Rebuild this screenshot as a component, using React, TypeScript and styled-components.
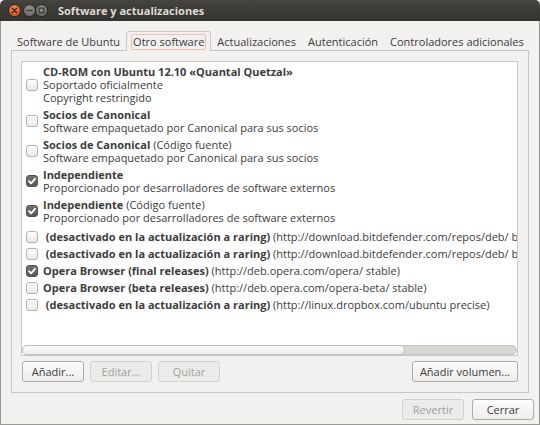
import React from "react";
import styled, { createGlobalStyle } from "styled-components";

const GlobalStyle = createGlobalStyle`
  html, body { margin: 0; padding: 0; background: #f2f1f0; }
  body {
    font-family: "Open Sans", "Noto Sans", "DejaVu Sans", sans-serif;
    font-size: 11px;
    color: #3c3c3c;
  }
  * { box-sizing: border-box; }
`;

const Window = styled.div`
  width: 540px;
  height: 425px;
  display: flex;
  flex-direction: column;
  background: #f2f1f0;
  overflow: hidden;
`;

const TitleBar = styled.div`
  height: 21px;
  flex: none;
  display: flex;
  align-items: center;
  padding-left: 9px;
  background: linear-gradient(#45443f, #3b3a36 50%, #34332f);
  border-radius: 5px 5px 0 0;
`;

const WinButton = styled.span<{ $kind: "close" | "min" | "max" }>`
  width: 11px;
  height: 11px;
  border-radius: 50%;
  flex: none;
  display: inline-flex;
  align-items: center;
  justify-content: center;
  margin-right: ${(p) => (p.$kind === "close" ? "4px" : p.$kind === "min" ? "1px" : "11px")};
  background: ${(p) =>
    p.$kind === "close"
      ? "radial-gradient(circle at 50% 35%, #f79369, #e65a27 65%, #c2461c)"
      : "radial-gradient(circle at 50% 35%, #94928d, #72706b 65%, #5a5854)"};
  box-shadow: 0 0 0 1px rgba(0, 0, 0, 0.3);
`;

const Title = styled.span`
  font-weight: 700;
  font-size: 11px;
  color: #dfdbd2;
`;

const Body = styled.div`
  flex: 1;
  display: flex;
  flex-direction: column;
  border: 1px solid #9a9894;
  border-top: none;
  min-height: 0;
`;

const NotebookArea = styled.div`
  flex: 1;
  display: flex;
  flex-direction: column;
  padding: 10px 10px 0 10px;
  min-height: 0;
`;

const TabBar = styled.div`
  height: 20px;
  flex: none;
  display: flex;
  border-bottom: 1px solid #c9c7c3;
`;

const Tab = styled.div<{ $active?: boolean }>`
  display: flex;
  align-items: center;
  padding: 1px 4px 0 4px;
  border: 1px solid ${(p) => (p.$active ? "#c9c7c3" : "transparent")};
  border-bottom: none;
  border-radius: 3px 3px 0 0;
  background: ${(p) => (p.$active ? "#f2f1f0" : "transparent")};
  margin-bottom: ${(p) => (p.$active ? "-1px" : "0")};
  white-space: nowrap;
`;

const FocusRing = styled.span`
  border: 1px solid #f0bfa9;
  border-radius: 2px;
  padding: 0 1px;
  line-height: 14px;
`;

const TabLabel = styled.span`
  padding: 0 1px;
  line-height: 14px;
`;

const Frame = styled.div`
  flex: 1;
  display: flex;
  flex-direction: column;
  gap: 5px;
  border: 1px solid #c9c7c3;
  border-top: none;
  padding: 10px 10px 10px 9px;
  min-height: 0;
`;

const ListBox = styled.div`
  flex: 1;
  display: flex;
  flex-direction: column;
  background: #ffffff;
  border: 1px solid #cbc9c6;
  min-height: 0;
`;

const Rows = styled.div`
  flex: 1;
  overflow: hidden;
  white-space: nowrap;
`;

const Row = styled.div<{ $padTop: number; $padBottom: number }>`
  display: flex;
  align-items: center;
  gap: 5px;
  padding: ${(p) => `${p.$padTop}px 0 ${p.$padBottom}px 4px`};
`;

const CheckBox = styled.span<{ $checked?: boolean }>`
  width: 12px;
  height: 12px;
  flex: none;
  border-radius: 3px;
  display: inline-flex;
  align-items: center;
  justify-content: center;
  border: 1px solid ${(p) => (p.$checked ? "#54524e" : "#b3b1ad")};
  background: ${(p) =>
    p.$checked
      ? "linear-gradient(#74726e, #5a5854)"
      : "linear-gradient(#fdfdfd, #ebeae8)"};
`;

const RowText = styled.div`
  display: flex;
  flex-direction: column;
`;

const Line = styled.div`
  line-height: 13px;
  height: 13px;
`;

const Strong = styled.span`
  font-weight: 700;
`;

const ScrollTrack = styled.div`
  height: 10px;
  flex: none;
  display: flex;
  background: #d7d6d3;
  border: 1px solid #c8c6c3;
  border-radius: 5px;
`;

const ScrollThumb = styled.div<{ $ratio: number }>`
  width: ${(p) => p.$ratio * 100}%;
  margin: -1px 0 -1px -1px;
  background: linear-gradient(#fbfbfa, #efeeec);
  border: 1px solid #c2c0bd;
  border-radius: 5px;
`;

const ButtonRow = styled.div`
  flex: none;
  display: flex;
  gap: 6px;
  padding-left: 1px;
`;

const Spacer = styled.div`
  flex: 1;
`;

const Button = styled.button<{ $disabled?: boolean }>`
  height: 21px;
  min-width: 62px;
  padding: 0 7px;
  font-family: inherit;
  font-size: 11px;
  line-height: 19px;
  border-radius: 3px;
  border: 1px solid ${(p) => (p.$disabled ? "#d3d1cd" : "#aeaca8")};
  background: ${(p) =>
    p.$disabled ? "#ecebe9" : "linear-gradient(#fcfcfb, #eeedeb)"};
  color: ${(p) => (p.$disabled ? "#a3a19d" : "#3c3c3c")};
  box-shadow: ${(p) => (p.$disabled ? "none" : "inset 0 1px 0 #ffffff")};
`;

const ActionRow = styled.div`
  height: 31px;
  flex: none;
  display: flex;
  justify-content: flex-end;
  gap: 8px;
  padding: 6px 5px 4px 0;
`;

type Item = {
  checked?: boolean;
  padTop?: number;
  padBottom?: number;
  lines: { bold?: string; rest?: string }[];
};

const items: Item[] = [
  {
    padTop: 3,
    lines: [
      { bold: "CD-ROM con Ubuntu 12.10 «Quantal Quetzal»" },
      { rest: "Soportado oficialmente" },
      { rest: "Copyright restringido" },
    ],
  },
  {
    lines: [
      { bold: "Socios de Canonical" },
      { rest: "Software empaquetado por Canonical para sus socios" },
    ],
  },
  {
    lines: [
      { bold: "Socios de Canonical", rest: " (Código fuente)" },
      { rest: "Software empaquetado por Canonical para sus socios" },
    ],
  },
  {
    checked: true,
    lines: [
      { bold: "Independiente" },
      { rest: "Proporcionado por desarrolladores de software externos" },
    ],
  },
  {
    checked: true,
    padBottom: 4,
    lines: [
      { bold: "Independiente", rest: " (Código fuente)" },
      { rest: "Proporcionado por desarrolladores de software externos" },
    ],
  },
  {
    lines: [
      {
        bold: "\u00a0(desactivado en la actualización a raring)",
        rest: " (http://download.bitdefender.com/repos/deb/ bitdefender non-free)",
      },
    ],
  },
  {
    lines: [
      {
        bold: "\u00a0(desactivado en la actualización a raring)",
        rest: " (http://download.bitdefender.com/repos/deb/ bitdefender non-free)",
      },
    ],
  },
  {
    checked: true,
    lines: [
      {
        bold: "Opera Browser (final releases)",
        rest: " (http://deb.opera.com/opera/ stable)",
      },
    ],
  },
  {
    lines: [
      {
        bold: "Opera Browser (beta releases)",
        rest: " (http://deb.opera.com/opera-beta/ stable)",
      },
    ],
  },
  {
    lines: [
      {
        bold: "\u00a0(desactivado en la actualización a raring)",
        rest: " (http://linux.dropbox.com/ubuntu precise)",
      },
    ],
  },
];

const tabs = [
  "Software de Ubuntu",
  "Otro software",
  "Actualizaciones",
  "Autenticación",
  "Controladores adicionales",
];

const CloseIcon = () => (
  <svg width="7" height="7" viewBox="0 0 7 7">
    <path d="M1.3 1.3 L5.7 5.7 M5.7 1.3 L1.3 5.7" stroke="#3a2a22" strokeWidth="1.5" strokeLinecap="round" />
  </svg>
);

const MinIcon = () => (
  <svg width="7" height="7" viewBox="0 0 7 7">
    <path d="M1.2 3.5 H5.8" stroke="#3c3b37" strokeWidth="1.6" strokeLinecap="round" />
  </svg>
);

const MaxIcon = () => (
  <svg width="7" height="7" viewBox="0 0 7 7">
    <rect x="1.2" y="1.2" width="4.6" height="4.6" fill="none" stroke="#3c3b37" strokeWidth="1.3" />
  </svg>
);

const CheckMark = () => (
  <svg width="10" height="10" viewBox="0 0 10 10">
    <path d="M2 5.2 L4.1 7.3 L8 2.8" fill="none" stroke="#ffffff" strokeWidth="1.8" strokeLinecap="round" strokeLinejoin="round" />
  </svg>
);

export default function App() {
  return (
    <>
      <GlobalStyle />
      <Window>
        <TitleBar>
          <WinButton $kind="close">
            <CloseIcon />
          </WinButton>
          <WinButton $kind="min">
            <MinIcon />
          </WinButton>
          <WinButton $kind="max">
            <MaxIcon />
          </WinButton>
          <Title>Software y actualizaciones</Title>
        </TitleBar>
        <Body>
          <NotebookArea>
            <TabBar>
              {tabs.map((t, i) => (
                <Tab key={t} $active={i === 1}>
                  {i === 1 ? <FocusRing>{t}</FocusRing> : <TabLabel>{t}</TabLabel>}
                </Tab>
              ))}
            </TabBar>
            <Frame>
              <ListBox>
                <Rows>
                  {items.map((it, i) => (
                    <Row key={i} $padTop={it.padTop ?? 2} $padBottom={it.padBottom ?? 2}>
                      <CheckBox $checked={it.checked}>{it.checked && <CheckMark />}</CheckBox>
                      <RowText>
                        {it.lines.map((l, j) => (
                          <Line key={j}>
                            {l.bold && <Strong>{l.bold}</Strong>}
                            {l.rest}
                          </Line>
                        ))}
                      </RowText>
                    </Row>
                  ))}
                </Rows>
                <ScrollTrack>
                  <ScrollThumb $ratio={0.776} />
                </ScrollTrack>
              </ListBox>
              <ButtonRow>
                <Button>Añadir...</Button>
                <Button $disabled>Editar...</Button>
                <Button $disabled>Quitar</Button>
                <Spacer />
                <Button>Añadir volumen...</Button>
              </ButtonRow>
            </Frame>
          </NotebookArea>
          <ActionRow>
            <Button $disabled>Revertir</Button>
            <Button>Cerrar</Button>
          </ActionRow>
        </Body>
      </Window>
    </>
  );
}
